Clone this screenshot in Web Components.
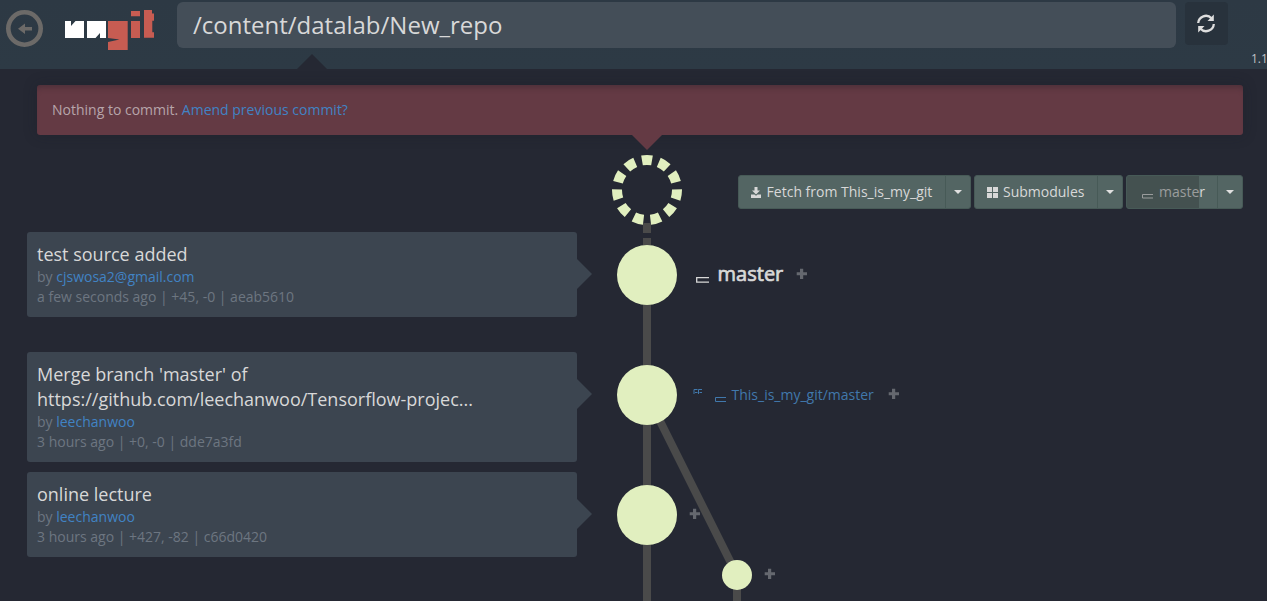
<!DOCTYPE html>
<html lang="en">
<head>
<meta charset="utf-8">
<title>ungit</title>
<style>
html,body{margin:0;height:100%;overflow:hidden;background:#252833}
body{font:14px/20px "Open Sans",sans-serif;color:#d8d8d8}
</style>
</head>
<body>
<ungit-app></ungit-app>
<script>
function define(name, html) {
  const template = document.createElement('template');
  template.innerHTML = html;
  customElements.define(name, class extends HTMLElement {
    constructor() {
      super();
      this.attachShadow({ mode: 'open' }).appendChild(template.content.cloneNode(true));
    }
  });
}

define('ungit-logo', `
<style>:host{display:block;width:90px;height:40px}svg{display:block}</style>
<svg width="90" height="40" viewBox="65 10 90 40">
  <g fill="#fff"><path d="M65 21H71V26L75.500 21H84V38H65Z"/><path d="M87 21H106V38H100V33L95.500 38H87Z"/></g>
  <g fill="#c75c52"><path d="M108 21H127.700V50H108V42L119.500 39.500L108 38Z"/><path d="M131 11H140V16.300H131ZM131 21H140V38H131Z"/><path d="M144 10H152V13.500H154V20.700H152.300V32.300H154V37.800H144Z"/></g>
</svg>`);

define('path-bar', `
<style>
:host{display:block;height:69px;background:linear-gradient(#2d3944,#2d3a45);position:relative;box-sizing:border-box}
.row{display:flex;align-items:flex-start;height:69px;overflow:hidden}
.back{margin:10px 0 0 6px;flex:none}
ungit-logo{margin:10px 0 0 22px;flex:none}
.path{margin:2px 0 0 22px;width:999px;height:46px;box-sizing:border-box;padding-left:16px;border-radius:6px;background:#444e58;font-size:24px;line-height:46px;color:#d8d8d8;flex:none}
.refresh{margin:2px 0 0 9px;width:43px;height:43px;border-radius:4px;background:#28323c;display:flex;align-items:center;justify-content:center;flex:none}
.refresh svg{margin-right:2px}
.version{margin:50px 0 0 23px;font-size:12px;line-height:18px;color:#c0c3c6;white-space:nowrap;flex:none}
.notch{position:absolute;left:297px;bottom:0}
svg{display:block}
</style>
<div class="row">
  <svg class="back" width="37" height="37"><circle cx="18.500" cy="18.500" r="16.200" fill="none" stroke="#6c6a68" stroke-width="4.600"/><path fill="#6c6a68" d="M12 18.700L19 13.500V17H26V20.400H19V24Z"/></svg>
  <ungit-logo></ungit-logo>
  <div class="path"><slot></slot></div>
  <div class="refresh"><svg width="18" height="19" viewBox="0 0 18 19"><g fill="none" stroke="#dedede" stroke-width="2.300"><path d="M1.200 9A7.700 7.700 0 0 1 14.500 4.300"/><path d="M16.800 10A7.700 7.700 0 0 1 3.500 14.700"/></g><g fill="#dedede"><path d="M16.800.500V7H10.500Z"/><path d="M1.200 18.500V12H7.500Z"/></g></svg></div>
  <div class="version">1.1</div>
</div>
<svg class="notch" width="30" height="15"><path fill="#252833" d="M0 15L15 0L30 15Z"/></svg>`);

define('staging-alert', `
<style>
:host{display:block;position:relative;margin:16px 24px 0 37px;height:50px;box-sizing:border-box;padding:15px;border-radius:3px;background:#643a44;color:#b7a5aa;box-shadow:inset 0 6px 6px -4px rgba(30,25,35,.35),0 0 14px rgba(25,27,38,.3)}
::slotted(a){color:#4183c4}
svg{position:absolute;left:595px;top:50px}
</style>
<slot></slot><svg width="30" height="15"><path fill="#643a44" d="M0 0H30L15 15Z"/></svg>`);

define('split-button', `
<style>
:host{display:flex;height:34px;box-sizing:border-box;border:1px solid #475a57;border-radius:3px;background:#536563;color:#d8d8d8;position:relative;overflow:hidden;flex:none}
.main{display:flex;align-items:center;flex:1;box-sizing:border-box;padding-left:12px;white-space:pre;position:relative}
.bar{position:absolute;z-index:1;left:0;top:0;bottom:0;width:0;background:rgba(40,45,45,.35)}
.caret{width:24px;border-left:1px solid #475a57;display:flex;align-items:center;justify-content:center}
::slotted(svg){display:block;flex:none}
:host([progress]) .main{padding-left:11px}
:host([progress]) .bar{width:72px}
</style>
<div class="bar"></div><div class="main"><slot></slot></div>
<div class="caret"><svg width="8" height="4"><path fill="#e0e0e0" d="M0 0H8L4 4Z"/></svg></div>`);

define('commit-card', `
<style>
:host{display:block;position:relative;width:550px;box-sizing:border-box;padding:10px;border-radius:3px;background:#3c4550;color:#6d7681}
.title{font-size:18px;line-height:25px;color:#d8d8d8}
.title ::slotted(*){display:block}
.author{color:#4183c4}
svg{position:absolute;left:550px;top:27px}
</style>
<div class="title"><slot></slot></div>
<div>by <span class="author"><slot name="author"></slot></span></div>
<div><slot name="meta"></slot></div>
<svg width="15" height="30"><path fill="#3c4550" d="M0 0L15 15L0 30Z"/></svg>`);

define('git-graph', `
<style>:host{display:block}svg{display:block}</style>
<svg width="200" height="466" viewBox="600 135 200 466">
  <g stroke="#4a4a4a" stroke-width="8" fill="none">
    <path d="M647 275V601M647 395L737 575V601"/>
  </g>
  <circle cx="647" cy="190" r="30" fill="none" stroke="#e1efbf" stroke-width="10" pathLength="187" stroke-dasharray="10 7" stroke-dashoffset="5" transform="rotate(-90 647 190)"/>
  <path d="M647 223V245" stroke="#4a4a4a" stroke-width="8" stroke-dasharray="10 5"/>
  <g fill="#e1efbf"><circle cx="647" cy="275" r="30"/><circle cx="647" cy="395" r="30"/><circle cx="647" cy="515" r="30"/><circle cx="737" cy="575" r="15"/></g>
</svg>`);

define('plus-mark', `
<style>:host{display:block;width:11px;height:11px}svg{display:block}</style>
<svg width="11" height="11"><path fill="#65686f" d="M4 .700H7.200V4.200H11V7.200H7.200V11H4V7.200H.700V4.200H4Z"/></svg>`);

define('ref-label', `
<style>
:host{display:block;position:relative;white-space:nowrap;color:#4178ac}
:host([current]){font-size:20px;line-height:28px;color:#d8d8d8;-webkit-text-stroke:.7px #d8d8d8}
</style><slot></slot>`);

define('ungit-app', `
<style>
:host{display:block;height:601px;overflow:hidden;background:#252833}
.repo{position:relative;display:grid;grid-template-columns:550px 1fr;height:466px;padding-left:27px}
.log{padding-top:97px}
.slot{height:120px}
.tools{display:flex;justify-content:flex-end;gap:3px;margin:40px 24px 0 0;height:34px}
.gap{margin-left:5px}
a{color:#4183c4;text-decoration:none}
git-graph{position:absolute;left:600px;top:0}
.ref,.mark{position:absolute}
</style>
<path-bar>/content/datalab/New_repo</path-bar>
<staging-alert>Nothing to commit. <a>Amend previous commit?</a></staging-alert>
<div class="repo">
  <div class="log">
    <div class="slot"><commit-card>test source added<span slot="author">cjswosa2@gmail.com</span><span slot="meta">a few seconds ago | +45, -0 | aeab5610</span></commit-card></div>
    <div class="slot"><commit-card><span>Merge branch 'master' of</span><span>https://github.com/leechanwoo/Tensorflow-projec...</span><span slot="author">leechanwoo</span><span slot="meta">3 hours ago | +0, -0 | dde7a3fd</span></commit-card></div>
    <div class="slot"><commit-card>online lecture<span slot="author">leechanwoo</span><span slot="meta">3 hours ago | +427, -82 | c66d0420</span></commit-card></div>
  </div>
  <div class="tools">
    <split-button style="width:233px"><svg width="10" height="11"><path fill="#d8d8d8" d="M3.500 0H6.500V3.500H9L5 7.500L1 3.500H3.500ZM0 7.500H3.500L5 8.700L6.500 7.500H10V11H0Z"/></svg><span class="gap" style="margin-left:5.6px">Fetch from This_is_my_git</span></split-button>
    <split-button style="width:149px"><svg width="11" height="11"><path fill="#d8d8d8" d="M0 0H5V5H0ZM6 0H11V5H6ZM0 6H5V11H0ZM6 6H11V11H6Z"/></svg><span class="gap">Submodules</span></split-button>
    <split-button progress style="width:117px"><svg width="15" height="14"><path fill="none" stroke="#d8d8d8" d="M15 9.500H4.500V13H15"/></svg><span class="gap" style="margin-left:6px">master</span></split-button>
  </div>
  <git-graph></git-graph>
  <svg class="mark" style="left:696px;top:142px" width="13" height="6"><path fill="none" stroke="#d8d8d8" stroke-width="1.300" d="M13 .700H.700V5.200H13"/></svg>
  <ref-label current class="ref" style="left:717.6px;top:124.500px">master</ref-label>
  <plus-mark class="mark" style="left:796px;top:133px"></plus-mark>
  <svg class="mark" style="left:693px;top:254px" width="33" height="14"><path fill="none" stroke="#4178ac" d="M4.500 .500H1V5M2 3.500H4.500M9 .500H5.500V5M6.500 3.500H9M33 8.500H22.500V12.500H33"/></svg>
  <ref-label class="ref" style="left:731.5px;top:250px">This_is_my_git/master</ref-label>
  <plus-mark class="mark" style="left:887.500px;top:253px"></plus-mark>
  <plus-mark class="mark" style="left:689px;top:373px"></plus-mark>
  <plus-mark class="mark" style="left:764px;top:433px"></plus-mark>
</div>`);
</script>
</body>
</html>
